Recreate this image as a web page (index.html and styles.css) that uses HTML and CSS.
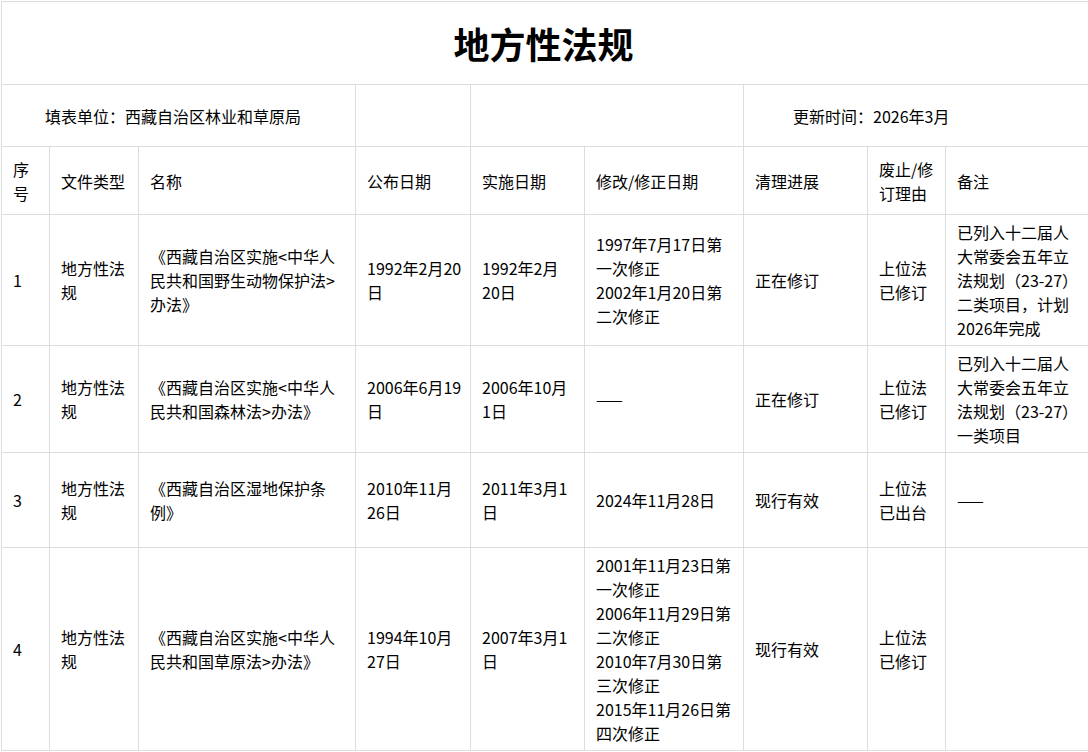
FILE: index.html
```html
<!DOCTYPE html>
<html lang="zh-CN">
<head>
<meta charset="utf-8">
<title>地方性法规</title>
<link rel="stylesheet" href="styles.css">
</head>
<body>
<table class="law-table">
  <colgroup>
    <col class="c-no">
    <col class="c-type">
    <col class="c-name">
    <col class="c-pub">
    <col class="c-eff">
    <col class="c-rev">
    <col class="c-prog">
    <col class="c-reason">
    <col class="c-note">
  </colgroup>
  <tbody>
    <tr class="row-title">
      <td colspan="9" class="title">地方性法规</td>
    </tr>
    <tr class="row-info">
      <td colspan="3" class="info-unit">填表单位：西藏自治区林业和草原局</td>
      <td></td>
      <td colspan="2"></td>
      <td colspan="3" class="info-time">更新时间：2026年3月</td>
    </tr>
    <tr class="row-head">
      <td>序号</td>
      <td>文件类型</td>
      <td>名称</td>
      <td>公布日期</td>
      <td>实施日期</td>
      <td>修改/修正日期</td>
      <td>清理进展</td>
      <td>废止/修订理由</td>
      <td>备注</td>
    </tr>
    <tr class="row-1">
      <td>1</td>
      <td>地方性法规</td>
      <td>《西藏自治区实施&lt;中华人民共和国野生动物保护法&gt;办法》</td>
      <td>1992年2月20日</td>
      <td>1992年2月20日</td>
      <td>1997年7月17日第一次修正<br>2002年1月20日第二次修正</td>
      <td>正在修订</td>
      <td>上位法已修订</td>
      <td>已列入十二届人大常委会五年立法规划（23-27）二类项目，计划2026年完成</td>
    </tr>
    <tr class="row-2">
      <td>2</td>
      <td>地方性法规</td>
      <td>《西藏自治区实施&lt;中华人民共和国森林法&gt;办法》</td>
      <td>2006年6月19日</td>
      <td>2006年10月1日</td>
      <td>——</td>
      <td>正在修订</td>
      <td>上位法已修订</td>
      <td>已列入十二届人大常委会五年立法规划（23-27）一类项目</td>
    </tr>
    <tr class="row-3">
      <td>3</td>
      <td>地方性法规</td>
      <td>《西藏自治区湿地保护条例》</td>
      <td>2010年11月26日</td>
      <td>2011年3月1日</td>
      <td>2024年11月28日</td>
      <td>现行有效</td>
      <td>上位法已出台</td>
      <td>——</td>
    </tr>
    <tr class="row-4">
      <td>4</td>
      <td>地方性法规</td>
      <td>《西藏自治区实施&lt;中华人民共和国草原法&gt;办法》</td>
      <td>1994年10月27日</td>
      <td>2007年3月1日</td>
      <td>2001年11月23日第一次修正<br>2006年11月29日第二次修正<br>2010年7月30日第三次修正<br>2015年11月26日第四次修正</td>
      <td>现行有效</td>
      <td>上位法已修订</td>
      <td></td>
    </tr>
  </tbody>
</table>
</body>
</html>
```

FILE: styles.css
```css
html, body {
  margin: 0;
  padding: 0;
  background: #ffffff;
  overflow: hidden;
}

body {
  padding: 1px 0 0 1px;
  font-family: "Noto Sans CJK SC", "Noto Sans", sans-serif;
  font-size: 16px;
  line-height: 24px;
  color: #000000;
}

.law-table {
  border-collapse: collapse;
  table-layout: fixed;
  width: 1088px;
}

.law-table td {
  border: 1px solid #dddddd;
  padding: 0 8px 0 11px;
  vertical-align: middle;
  text-align: left;
  word-break: normal;
}

.c-no { width: 48px; }
.c-type { width: 89px; }
.c-name { width: 217px; }
.c-pub { width: 115px; }
.c-eff { width: 114px; }
.c-rev { width: 159px; }
.c-prog { width: 124px; }
.c-reason { width: 78px; }
.c-note { width: 144px; }

.row-title { height: 83px; }
.row-info { height: 62px; }
.row-head { height: 68px; }
.row-1 { height: 131px; }
.row-2 { height: 107px; }
.row-3 { height: 95px; }
.row-4 { height: 203px; }

.law-table td.title {
  text-align: center;
  padding: 0 14px 0 10px;
  font-size: 36px;
  font-weight: 700;
  line-height: 48px;
}

.law-table td.info-unit {
  padding-left: 43px;
}

.law-table td.info-time {
  padding-left: 49px;
}
```
